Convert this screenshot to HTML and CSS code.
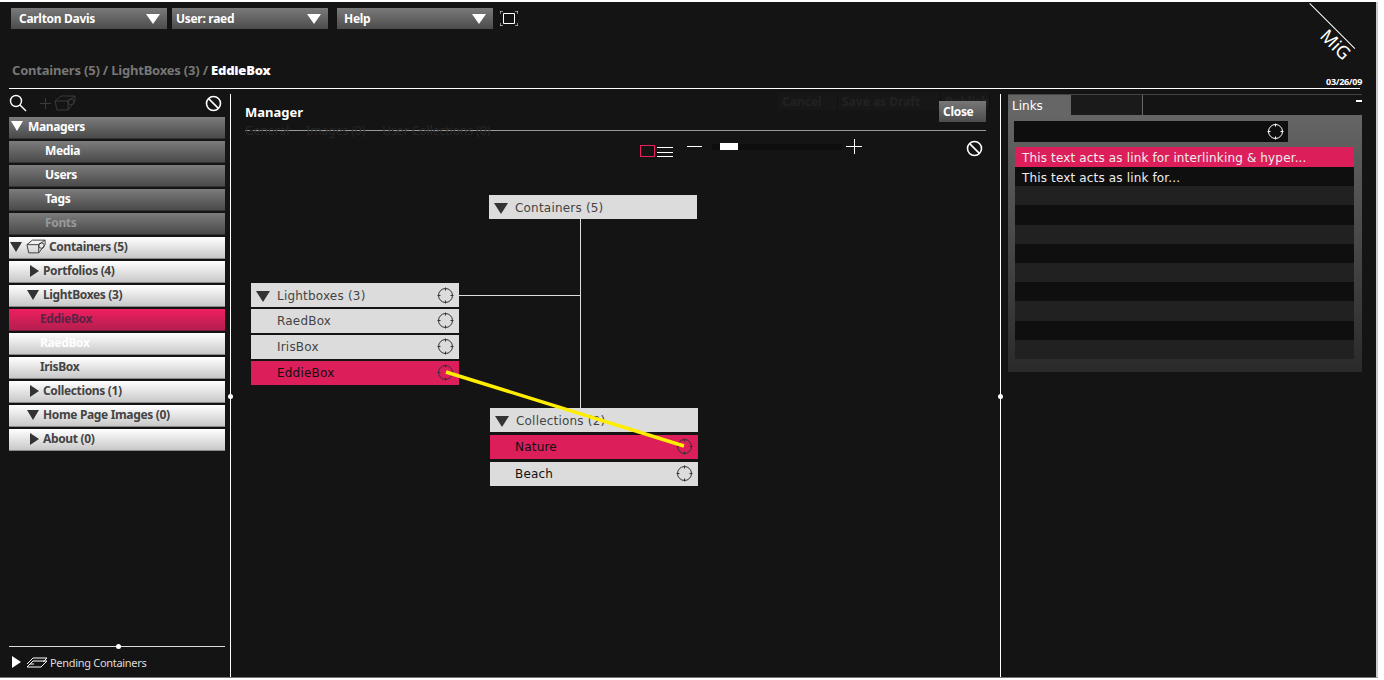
FILE: index.html
```html
<!DOCTYPE html>
<html lang="en">
<head>
  <meta charset="UTF-8">
  <title>MiG Manager</title>
  <link rel="stylesheet" href="styles.css">
</head>
<body>
  <svg class="defs" width="0" height="0">
    <symbol id="target" viewBox="0 0 17 17">
      <circle cx="8.5" cy="8.5" r="7" fill="none" stroke="currentColor"/>
      <path d="M8.5 0.5v3M8.5 13.5v3M0.5 8.5h3M13.5 8.5h3" fill="none" stroke="currentColor"/>
    </symbol>
    <symbol id="block" viewBox="0 0 17 17">
      <circle cx="8.5" cy="8.5" r="7" fill="none" stroke="currentColor" stroke-width="1.6"/>
      <path d="M3.6 3.6l9.8 9.8" fill="none" stroke="currentColor" stroke-width="1.6"/>
    </symbol>
    <symbol id="cube" viewBox="0 0 22 16">
      <path d="M1 6h13v9H3zM1 6l6-5h14l-7 5M14 15l7-9V1M14 6" fill="none" stroke="currentColor"/>
      <circle cx="17" cy="7" r="3" fill="none" stroke="currentColor"/>
    </symbol>
  </svg>

  <div class="app">
    <header class="topbar">
      <div class="menus">
        <div class="menu menu-first"><span>Carlton Davis</span><i class="tri-down white"></i></div>
        <div class="menu menu-user"><span>User: raed</span><i class="tri-down white"></i></div>
        <div class="menu menu-help"><span>Help</span><i class="tri-down white"></i></div>
        <svg class="frame-icon" width="18" height="15" viewBox="0 0 18 15">
          <path d="M3.5 2.5h11v10h-11z" fill="none" stroke="#fff"/>
          <path d="M0 3V0h3M15 0h3v3M18 12v3h-3M3 15H0v-3" fill="none" stroke="#fff"/>
        </svg>
      </div>
      <div class="crumbrow">
        <div class="crumbs">Containers (5) / LightBoxes (3) / <b>EddieBox</b></div>
        <div class="date">03/26/09</div>
      </div>
      <div class="logo-line"></div>
      <div class="logo">MiG</div>
    </header>

    <div class="rule"></div>

    <main class="columns">
      <aside class="sidebar">
        <div class="tools">
          <svg class="search" width="18" height="18" viewBox="0 0 18 18">
            <circle cx="7" cy="7" r="5.5" fill="none" stroke="#fff" stroke-width="1.4"/>
            <path d="M11 11l6 6" stroke="#fff" stroke-width="1.4"/>
          </svg>
          <span class="dim-plus"></span>
          <svg class="dim-cube"><use href="#cube"/></svg>
          <svg class="block side-block"><use href="#block"/></svg>
        </div>
        <nav class="tree">
          <div class="row dark top-level"><i class="tri-down white"></i>Managers</div>
          <div class="row dark sub">Media</div>
          <div class="row dark sub">Users</div>
          <div class="row dark sub">Tags</div>
          <div class="row dark sub off">Fonts</div>
          <div class="row light"><i class="tri-down"></i><svg class="cube"><use href="#cube"/></svg>Containers (5)</div>
          <div class="row light lvl2"><i class="tri-right"></i>Portfolios (4)</div>
          <div class="row light lvl2 open"><i class="tri-down"></i>LightBoxes (3)</div>
          <div class="row pink leaf">EddieBox</div>
          <div class="row light leaf ghost">RaedBox</div>
          <div class="row light leaf">IrisBox</div>
          <div class="row light lvl2"><i class="tri-right"></i>Collections (1)</div>
          <div class="row light lvl2 open"><i class="tri-down"></i>Home Page Images (0)</div>
          <div class="row light lvl2"><i class="tri-right"></i>About (0)</div>
        </nav>
        <div class="pending">
          <div class="pending-rule"><span class="dot"></span></div>
          <div class="pending-label">
            <i class="tri-right white"></i>
            <svg class="stack" width="22" height="11" viewBox="0 0 22 11">
              <path d="M1 10l6-6h14l-6 6zM1 7l6-6h14l-4 4M4 7h4" fill="none" stroke="#fff"/>
            </svg>
            Pending Containers
          </div>
        </div>
      </aside>

      <section class="manager">
        <span class="dot handle-l"></span>
        <span class="dot handle-r"></span>
        <div class="manager-head">
          <h2>Manager</h2>
          <div class="ghost-actions"><span class="ga-cancel">Cancel</span><span class="ga-save">Save as Draft</span><span>Publish</span></div>
          <button class="close">Close</button>
        </div>
        <div class="ghost-tabs"><span>General</span><span>Images (0)</span><span>User Collections (0)</span></div>
        <div class="view-tools">
          <span class="view-box"></span>
          <span class="view-lines"></span>
          <span class="minus"></span>
          <span class="slider"><span class="thumb"></span></span>
          <span class="plus"></span>
          <svg class="block view-block"><use href="#block"/></svg>
        </div>

        <div class="diagram">
          <span class="wire wire-v"></span>
          <span class="wire wire-h"></span>

          <div class="node node-containers">
            <div class="item"><i class="tri-down"></i>Containers (5)</div>
          </div>

          <div class="node node-lightboxes">
            <div class="item"><i class="tri-down"></i>Lightboxes (3)<svg class="target"><use href="#target"/></svg></div>
            <div class="item child">RaedBox<svg class="target"><use href="#target"/></svg></div>
            <div class="item child">IrisBox<svg class="target"><use href="#target"/></svg></div>
            <div class="item child active">EddieBox<svg class="target"><use href="#target"/></svg></div>
          </div>

          <div class="node node-collections">
            <div class="item"><i class="tri-down"></i>Collections (2)</div>
            <div class="item child active strong">Nature<svg class="target"><use href="#target"/></svg></div>
            <div class="item child strong">Beach<svg class="target"><use href="#target"/></svg></div>
          </div>

          <svg class="link-line" width="460" height="90" viewBox="0 0 460 90">
            <path d="M201 4L439 78" stroke="#ffee00" stroke-width="3.5"/>
          </svg>
        </div>
      </section>

      <aside class="links-col">
        <div class="links">
          <div class="tabs">
            <div class="tab on">Links</div>
            <div class="tab"></div>
            <span class="collapse"></span>
          </div>
          <div class="links-body">
            <div class="link-search"><svg class="target"><use href="#target"/></svg></div>
            <ul class="link-list">
              <li class="sel">This text acts as link for interlinking &amp; hyper...</li>
              <li>This text acts as link for...</li>
              <li></li><li></li><li></li><li></li><li></li><li></li><li></li><li></li><li></li>
            </ul>
          </div>
        </div>
      </aside>
    </main>
  </div>
</body>
</html>
```

FILE: styles.css
```css
html, body {
  margin: 0;
  height: 100%;
  background: #fff;
  overflow: hidden;
}
.defs {
  position: absolute;
}
.app {
  box-sizing: border-box;
  width: 1378px;
  height: 676px;
  margin-top: 2px;
  padding: 6px 0 0 1px;
  background: #141414;
  border-right: 2px solid #ccc;
  border-bottom: 1px solid #777;
  position: relative;
  font-family: "Noto Sans", sans-serif;
  overflow: hidden;
}

/* triangles */
.tri-down, .tri-right {
  display: inline-block;
  width: 0;
  height: 0;
  flex: none;
}
.tri-down {
  border-left: 6px solid transparent;
  border-right: 6px solid transparent;
  border-top: 10px solid #333;
}
.tri-right {
  border-top: 6px solid transparent;
  border-bottom: 6px solid transparent;
  border-left: 9px solid #333;
}
.tri-down.white { border-top-color: #fff; }
.tri-right.white { border-left-color: #fff; }

/* top */
.topbar {
  height: 80px;
}
.menus {
  display: flex;
  align-items: center;
  padding-left: 10px;
}
.menu {
  box-sizing: border-box;
  width: 156px;
  height: 21px;
  padding: 0 7px 0 8px;
  display: flex;
  align-items: center;
  justify-content: space-between;
  background: linear-gradient(#7a7a7a, #4c4c4c);
  color: #fff;
  font-size: 12px;
  font-weight: 700;
  letter-spacing: -0.3px;
  margin-right: 5px;
}
.menu .tri-down {
  border-left-width: 7px;
  border-right-width: 7px;
}
.menu-user { padding-left: 4px; margin-right: 9px; }
.menu-help { padding-left: 7px; margin-right: 7px; }
.crumbrow {
  display: flex;
  justify-content: space-between;
  align-items: flex-end;
  height: 51px;
  padding: 0 14px 0 11px;
}
.crumbs {
  font-size: 13px;
  font-weight: 700;
  letter-spacing: -0.2px;
  color: #777;
  line-height: 20px;
}
.crumbs b { color: #fff; }
.date {
  font-size: 9px;
  font-weight: 700;
  letter-spacing: -0.3px;
  color: #fff;
  line-height: 12px;
  margin-bottom: -8px;
}
.logo-line {
  position: absolute;
  left: 1310px;
  top: 1px;
  width: 64px;
  height: 1px;
  background: #fff;
  transform: rotate(45deg);
  transform-origin: 0 0;
}
.logo {
  position: absolute;
  left: 1319px;
  top: 32px;
  color: #fff;
  font-size: 18px;
  line-height: 20px;
  transform: rotate(45deg);
}
.rule {
  height: 1px;
  margin: 0 16px 0 8px;
  background: #fff;
}

/* columns */
.columns {
  display: flex;
  height: 588px;
}
.sidebar {
  box-sizing: border-box;
  width: 229px;
  padding: 3px 5px 0 8px;
  display: flex;
  flex-direction: column;
  flex: none;
}
.tools {
  display: flex;
  align-items: center;
  height: 22px;
  position: relative;
}
.dim-plus {
  width: 11px;
  height: 11px;
  margin-left: 13px;
  background: linear-gradient(#3a3a3a, #3a3a3a) center/100% 1px no-repeat,
              linear-gradient(#3a3a3a, #3a3a3a) center/1px 100% no-repeat;
}
.dim-cube {
  width: 22px;
  height: 16px;
  color: #3a3a3a;
  margin-left: 3px;
}
.block {
  width: 17px;
  height: 17px;
  color: #fff;
}
.side-block { margin-left: auto; margin-right: 3px; }
.tree {
  display: flex;
  flex-direction: column;
  gap: 2px;
  margin-top: 3px;
}
.row {
  box-sizing: border-box;
  height: 22px;
  display: flex;
  align-items: center;
  font-size: 12px;
  font-weight: 700;
  letter-spacing: -0.35px;
  padding-bottom: 3px;
  border-bottom: 1px solid #333;
}
.row.dark {
  background: linear-gradient(#7c7c7c, #4a4a4a);
  color: #fff;
}
.row.light {
  background: linear-gradient(#fff, #c8c8c8);
  color: #444;
  border-bottom-color: #888;
}
.row.pink {
  background: linear-gradient(#ee1f5e, #b51e50);
  color: #5c2244;
  border-bottom-color: #7d1a3c;
}
.top-level { padding-left: 2px; }
.top-level .tri-down { margin-right: 5px; }
.sub { padding-left: 36px; }
.off { color: #999 !important; }
.row.light > .tri-down { margin: 2px 4px 0 1px; }
.cube { width: 20px; height: 15px; margin-right: 3px; color: #333; }
.lvl2 { padding-left: 21px; }
.lvl2 .tri-right { margin: 2px 4px 0 0; }
.row.lvl2.open { padding-left: 18px; }
.row.lvl2.open > .tri-down { margin: 2px 4px 0 0; }
.leaf { padding-left: 31px; }
.ghost { color: #fff !important; }
.pending {
  margin-top: auto;
  margin-bottom: 7px;
}
.pending-rule {
  height: 1px;
  background: #ddd;
  position: relative;
  margin-bottom: 7px;
}
.dot {
  position: absolute;
  width: 5px;
  height: 5px;
  border-radius: 50%;
  background: #fff;
}
.pending-rule .dot { left: 107px; top: -2px; }
.pending-label {
  display: flex;
  align-items: center;
  color: #ddd;
  font-size: 11px;
  letter-spacing: -0.3px;
  height: 16px;
  padding-left: 3px;
}
.pending-label .tri-right { margin-right: 5px; }
.stack { margin-right: 2px; }

/* manager column */
.manager {
  box-sizing: border-box;
  width: 771px;
  flex: none;
  margin-top: 5px;
  border-left: 1px solid #fff;
  border-right: 1px solid #fff;
  padding: 0 14px;
  position: relative;
}
.handle-l { left: -3px; top: 300px; }
.handle-r { right: -3px; top: 300px; }
.manager-head {
  display: flex;
  align-items: flex-start;
  height: 36px;
  border-bottom: 1px solid #999;
  position: relative;
}
.manager-head h2 {
  margin: 8px 0 0;
  font-size: 13px;
  line-height: 20px;
  color: #fff;
  font-weight: 700;
}
.ghost-actions {
  position: absolute;
  left: 533px;
  top: -1px;
  display: flex;
  color: #222;
  font-size: 12px;
  font-weight: 700;
  line-height: 17px;
}
.ghost-actions span {
  box-sizing: border-box;
  padding-left: 4px;
  background: #171717;
  border-right: 1px solid #101010;
}
.ga-cancel { width: 60px; }
.ga-save { width: 103px; }
.close {
  position: absolute;
  right: 0;
  top: 7px;
  width: 47px;
  height: 21px;
  border: 0;
  padding: 0 0 0 4px;
  text-align: left;
  background: linear-gradient(#777, #4c4c4c);
  color: #fff;
  letter-spacing: -0.3px;
  font: 700 12px "Noto Sans", sans-serif;
}
.ghost-tabs {
  position: absolute;
  left: 14px;
  top: 29px;
  display: flex;
  color: #262626;
  font-size: 12px;
  line-height: 16px;
}
.ghost-tabs span { padding-right: 17px; }
.view-tools {
  display: flex;
  align-items: flex-start;
  height: 26px;
  padding-top: 8px;
  padding-left: 395px;
}
.view-box {
  box-sizing: border-box;
  width: 15px;
  height: 12px;
  margin-top: 6px;
  border: 1px solid #e81f5c;
}
.view-lines {
  width: 16px;
  height: 10px;
  margin: 8px 0 0 2px;
  background: linear-gradient(#fff, #fff) 0 0/100% 1px no-repeat,
              linear-gradient(#fff, #fff) 0 5px/100% 1px no-repeat,
              linear-gradient(#fff, #fff) 0 9px/100% 1px no-repeat;
}
.minus {
  width: 15px;
  height: 1px;
  margin: 7px 0 0 14px;
  background: #fff;
}
.slider {
  width: 130px;
  height: 6px;
  margin: 5px 0 0 10px;
  background: #0e0e0e;
  position: relative;
}
.thumb {
  position: absolute;
  left: 8px;
  top: -1px;
  width: 18px;
  height: 7px;
  background: #fff;
}
.plus {
  width: 16px;
  height: 15px;
  margin: 0 0 0 4px;
  background: linear-gradient(#fff, #fff) center/100% 1px no-repeat,
              linear-gradient(#fff, #fff) center/1px 100% no-repeat;
}
.view-block {
  margin-left: 104px;
  margin-top: 1px;
}

/* diagram nodes sit on a free canvas */
.diagram {
  position: absolute;
  left: 0;
  top: 100px;
  width: 100%;
  height: 400px;
}
.node {
  position: absolute;
  width: 208px;
  display: flex;
  flex-direction: column;
}
.node-containers { left: 258px; top: 1px; }
.node-lightboxes { left: 20px; top: 89px; gap: 2px; }
.node-collections { left: 259px; top: 214px; gap: 3px; }
.item {
  box-sizing: border-box;
  height: 24px;
  padding: 1px 0 0 5px;
  display: flex;
  align-items: center;
  background: #dcdcdc;
  color: #444;
  font-family: "DejaVu Sans", sans-serif;
  font-size: 12px;
  letter-spacing: 0.2px;
  position: relative;
}
.item > .tri-down {
  margin: 1px 7px 0 0;
  border-left-width: 7px;
  border-right-width: 7px;
  border-top-width: 11px;
}
.item.child { padding: 0 0 1px 26px; }
.item.active {
  background: #dc1e5a;
  color: #111;
}
.item.strong { color: #111; padding-left: 25px; }
.target {
  position: absolute;
  right: 5px;
  top: 4px;
  width: 17px;
  height: 17px;
  color: #333;
}
.item.child .target { top: 3px; }
.wire {
  position: absolute;
  background: #ddd;
}
.wire-v { left: 349px; top: 25px; width: 1px; height: 189px; }
.wire-h { left: 228px; top: 101px; width: 121px; height: 1px; }
.link-line {
  position: absolute;
  left: 14px;
  top: 174px;
}

/* links column */
.links-col {
  flex: none;
  padding: 5px 0 0 7px;
}
.links {
  box-sizing: border-box;
  width: 354px;
  height: 278px;
  background: linear-gradient(#6a6a6a, #2a2a2a);
}
.tabs {
  display: flex;
  height: 21px;
  background: #141414;
  border-top: 1px solid #444;
  box-sizing: border-box;
  position: relative;
}
.tab {
  box-sizing: border-box;
  width: 72px;
  height: 20px;
  border-right: 1px solid #666;
  background: #1a1a1a;
}
.tab.on {
  width: 63px;
  background: #666;
  color: #fff;
  font-family: "DejaVu Sans", sans-serif;
  font-size: 12px;
  line-height: 23px;
  padding-left: 4px;
  border-right: 0;
}
.collapse {
  position: absolute;
  right: 0;
  top: 5px;
  width: 6px;
  height: 2px;
  background: #fff;
}
.links-body {
  padding: 6px 8px 0 6px;
}
.link-search {
  width: 274px;
  height: 21px;
  background: #0e0e0e;
  position: relative;
  color: #fff;
}
.link-search .target {
  color: #fff;
  right: 4px;
  top: 2px;
}
.link-list {
  list-style: none;
  margin: 5px 0 0 1px;
  padding: 0;
  font-family: "DejaVu Sans", sans-serif;
  font-size: 12px;
  letter-spacing: 0.15px;
  color: #eee;
}
.link-list li {
  height: 19.2px;
  line-height: 22px;
  padding-left: 7px;
  background: #212121;
}
.link-list li:nth-child(even) { background: #0f0f0f; }
.link-list li.sel { height: 20px; background: #dc1e5a; }
```
